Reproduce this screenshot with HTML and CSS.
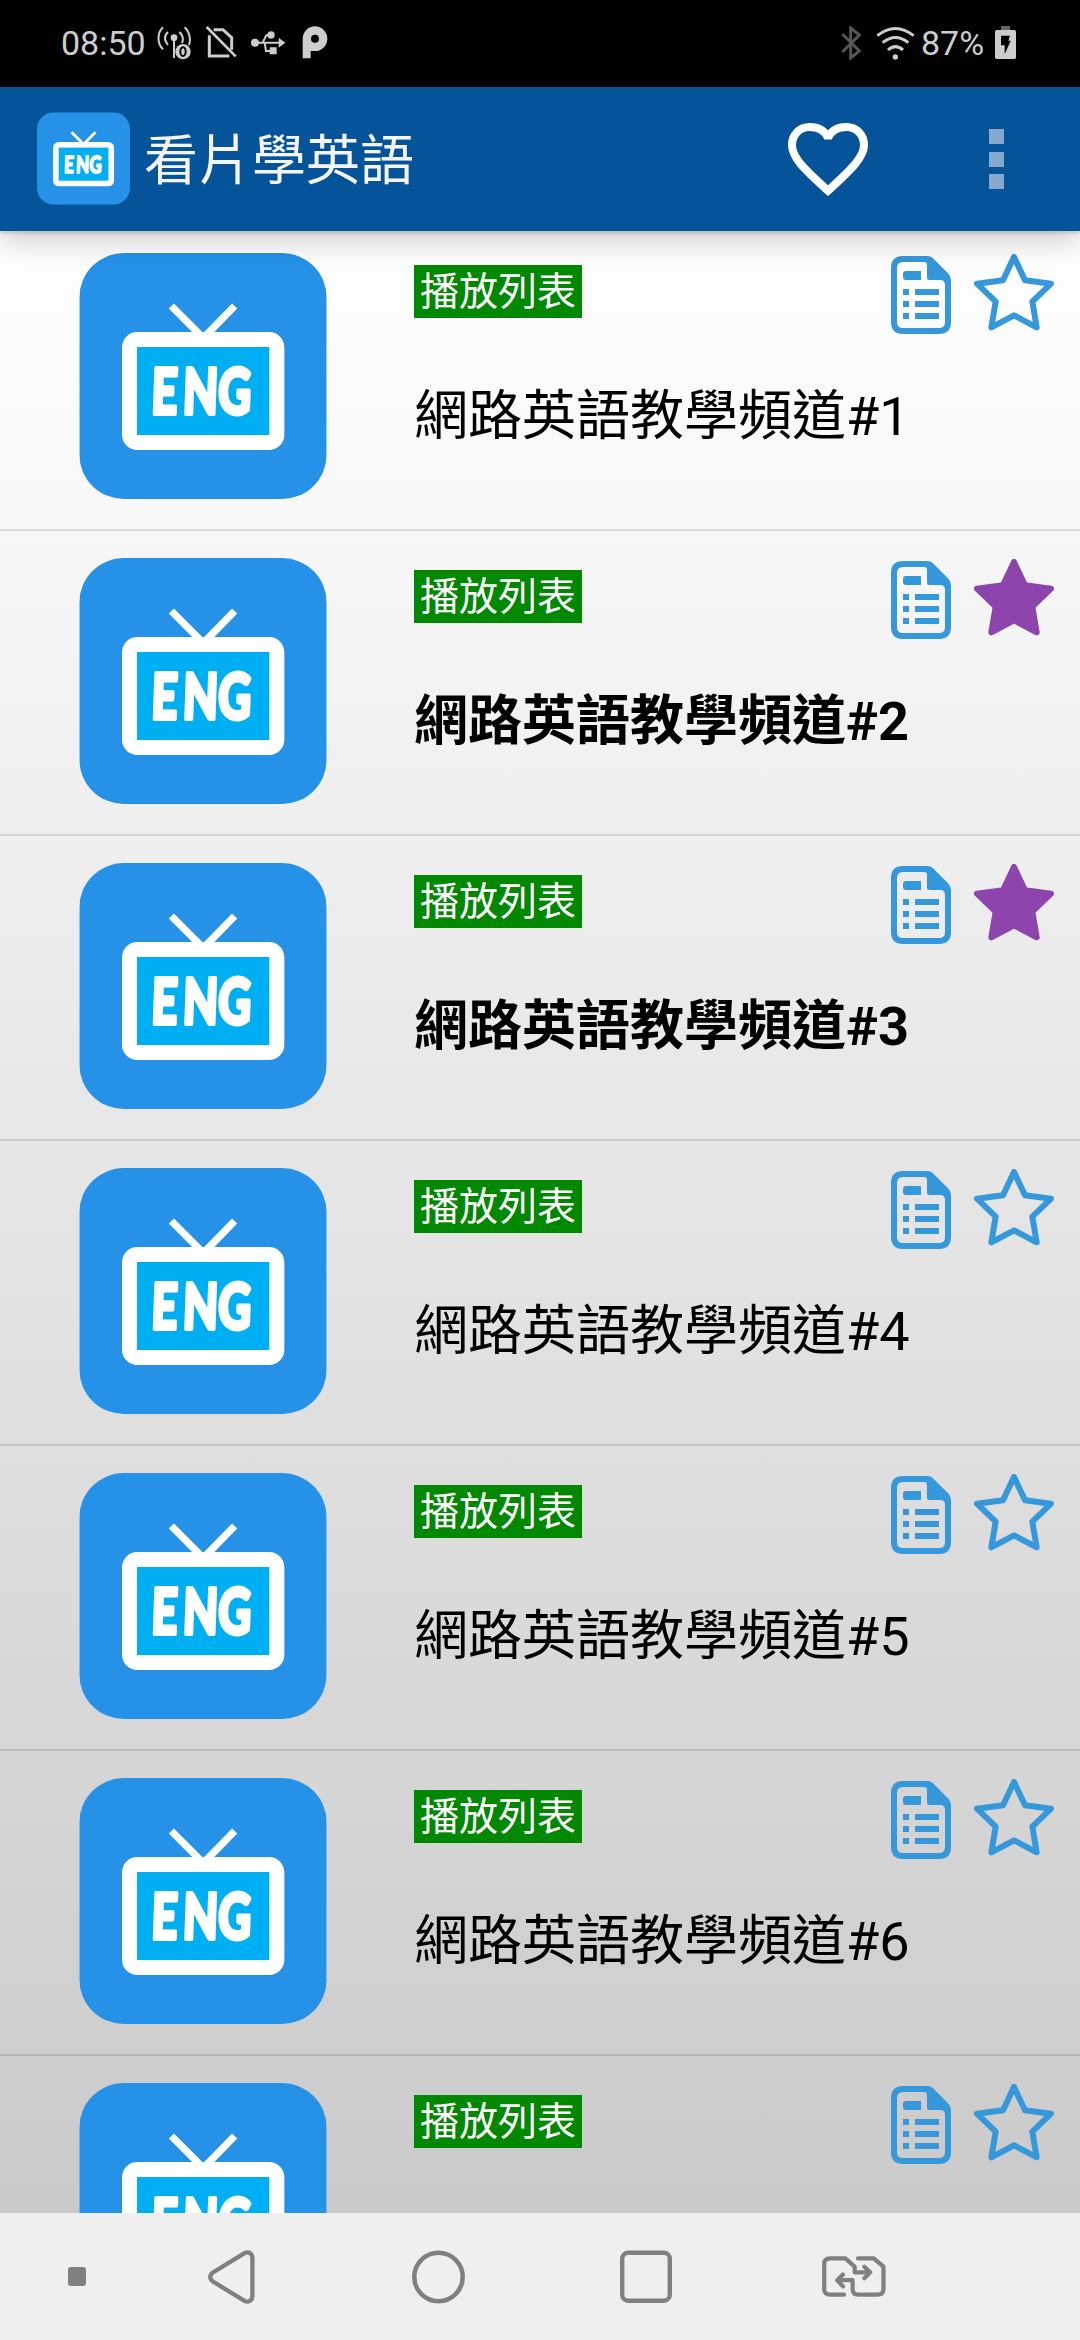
FILE: index.html
```html
<!DOCTYPE html>
<html lang="zh-Hant">
<head>
<meta charset="utf-8">
<title>看片學英語</title>
<link rel="stylesheet" href="styles.css">
</head>
<body>
<svg class="defs" aria-hidden="true">
  <symbol id="tv" viewBox="58 38 742 738">
    <rect x="58" y="38" width="742" height="738" rx="134" fill="#2592e7"/>
    <path d="M334 197L430 293L524 197" fill="none" stroke="#fff" stroke-width="22"/>
    <rect x="186" y="275" width="487" height="354" rx="46" fill="#fff"/>
    <rect x="231" y="320" width="397" height="264" fill="#00aff2"/>
  </symbol>
  <symbol id="doc" viewBox="453 528 180 234">
    <path fill="#3598db" fill-rule="evenodd" d="M489 528H562Q572 528 579 535L624 580Q633 589 633 599V726Q633 762 597 762H489Q453 762 453 726V564Q453 528 489 528ZM489 546Q471 546 471 564V726Q471 744 489 744H597Q615 744 615 726V615Q615 600 600 600H568Q561 600 561 593V555Q561 546 552 546Z"/>
    <path fill="#3598db" d="M498 573H543V600H498Q489 600 489 591V582Q489 573 498 573ZM489 627h18v18h-18zM525 627h72v18h-72zM489 663h18v18h-18zM525 663h72v18h-72zM489 699h18v18h-18zM525 699h72v18h-72z"/>
  </symbol>
  <symbol id="star" viewBox="702 521 240 231">
    <path d="M822 530L855 600L933 610L877 664L890 741L822 705L754 741L767 664L711 610L789 600Z" stroke-width="18" stroke-linejoin="round"/>
  </symbol>
</svg>

<div class="status">
  <span class="clock">08:50</span>
  <svg class="hotspot" width="34" height="34" viewBox="350 76 102 102">
    <g fill="none" stroke="#cdcdcd" stroke-width="6">
      <path d="M368 80C350 97 350 129 368 146M383 94C371 105 371 121 383 132M433 80C451 97 451 123 445 134M417 94C429 105 429 118 425 128"/>
      <path d="M401 110V171"/>
    </g>
    <circle cx="401" cy="111" r="10" fill="#cdcdcd"/>
    <circle cx="428" cy="153" r="26" fill="#000"/>
    <circle cx="428" cy="153" r="23" fill="#cdcdcd"/>
    <ellipse cx="428" cy="153" rx="8" ry="13" fill="none" stroke="#000" stroke-width="6"/>
    <path d="M401 120V171" stroke="#cdcdcd" stroke-width="6"/>
  </svg>
  <svg class="sim" width="31" height="32" viewBox="499 77 93 96">
    <path d="M522 88H550L576 112V148M569 167H509V105" fill="none" stroke="#cdcdcd" stroke-width="9"/>
    <path d="M501 80L588 168" stroke="#cdcdcd" stroke-width="8"/>
  </svg>
  <svg class="usb" width="35" height="24" viewBox="631 92 105 72">
    <path d="M640 127H718M666 127L677 105H690M672 127L676 152H690" fill="none" stroke="#cdcdcd" stroke-width="6"/>
    <circle cx="643" cy="127" r="12" fill="#cdcdcd"/><circle cx="691" cy="104" r="11" fill="#cdcdcd"/>
    <path d="M714 112L734 127L714 142ZM687 141h21v21h-21z" fill="#cdcdcd"/>
  </svg>
  <svg class="pico" width="26" height="33" viewBox="785 79 78 99">
    <path d="M787 176V117A37 37 0 1 1 824 154H811V176Z" fill="#cdcdcd"/>
    <circle cx="824" cy="117" r="12" fill="#000"/>
  </svg>
  <svg class="bt" width="20" height="34" viewBox="120 76 60 102">
    <path d="M124 100L175 151L149 172V82L175 103L124 154" fill="none" stroke="#555" stroke-width="9"/>
  </svg>
  <svg class="wifi" width="39" height="34" viewBox="225 76 117 102">
    <path d="M229 105Q283 62 338 105M245 126Q283 95 322 126M261 148Q283 128 306 148" fill="none" stroke="#cdcdcd" stroke-width="9"/>
    <circle cx="283" cy="169" r="8" fill="#cdcdcd"/>
  </svg>
  <span class="pct">87%</span>
  <svg class="bat" width="21" height="33" viewBox="585 78 63 99">
    <path d="M603 78h27v12h-27z" fill="#666"/>
    <rect x="585" y="90" width="63" height="87" rx="5" fill="#cdcdcd"/>
    <path d="M603 107H630L625 122H632L614 163V136H603Z" fill="#000"/>
  </svg>
</div>

<header class="bar">
  <svg class="logo" viewBox="0 0 742 738"><use href="#tv" width="742" height="738"/><text class="tv-text" x="0 132 278" transform="translate(214 482) skewX(-2) scale(.72 1)">ENG</text></svg>
  <h1 class="app-name">看片學英語</h1>
  <svg class="heart" width="80" height="74" viewBox="144 129 240 222">
    <path d="M264 173C253 150 232 141 209 141C178 141 156 165 156 195C156 232 190 265 264 332C338 265 372 230 372 195C372 165 350 141 319 141C296 141 275 150 264 173Z" fill="none" stroke="#fff" stroke-width="24" stroke-miterlimit="2"/>
  </svg>
  <div class="more"><i></i><i></i><i></i></div>
</header>

<main class="list">
  <article class="row">
    <svg class="thumb" viewBox="0 0 742 738"><use href="#tv" width="742" height="738"/><text class="tv-text" x="0 132 278" transform="translate(214 482) skewX(-2) scale(.72 1)">ENG</text></svg>
    <div class="info"><span class="tag">播放列表</span><h2 class="title">網路英語教學頻道#1</h2></div>
    <div class="actions"><svg class="doc"><use href="#doc"/></svg><svg class="star"><use href="#star"/></svg></div>
  </article>
  <article class="row fav">
    <svg class="thumb" viewBox="0 0 742 738"><use href="#tv" width="742" height="738"/><text class="tv-text" x="0 132 278" transform="translate(214 482) skewX(-2) scale(.72 1)">ENG</text></svg>
    <div class="info"><span class="tag">播放列表</span><h2 class="title">網路英語教學頻道#2</h2></div>
    <div class="actions"><svg class="doc"><use href="#doc"/></svg><svg class="star"><use href="#star"/></svg></div>
  </article>
  <article class="row fav">
    <svg class="thumb" viewBox="0 0 742 738"><use href="#tv" width="742" height="738"/><text class="tv-text" x="0 132 278" transform="translate(214 482) skewX(-2) scale(.72 1)">ENG</text></svg>
    <div class="info"><span class="tag">播放列表</span><h2 class="title">網路英語教學頻道#3</h2></div>
    <div class="actions"><svg class="doc"><use href="#doc"/></svg><svg class="star"><use href="#star"/></svg></div>
  </article>
  <article class="row">
    <svg class="thumb" viewBox="0 0 742 738"><use href="#tv" width="742" height="738"/><text class="tv-text" x="0 132 278" transform="translate(214 482) skewX(-2) scale(.72 1)">ENG</text></svg>
    <div class="info"><span class="tag">播放列表</span><h2 class="title">網路英語教學頻道#4</h2></div>
    <div class="actions"><svg class="doc"><use href="#doc"/></svg><svg class="star"><use href="#star"/></svg></div>
  </article>
  <article class="row">
    <svg class="thumb" viewBox="0 0 742 738"><use href="#tv" width="742" height="738"/><text class="tv-text" x="0 132 278" transform="translate(214 482) skewX(-2) scale(.72 1)">ENG</text></svg>
    <div class="info"><span class="tag">播放列表</span><h2 class="title">網路英語教學頻道#5</h2></div>
    <div class="actions"><svg class="doc"><use href="#doc"/></svg><svg class="star"><use href="#star"/></svg></div>
  </article>
  <article class="row">
    <svg class="thumb" viewBox="0 0 742 738"><use href="#tv" width="742" height="738"/><text class="tv-text" x="0 132 278" transform="translate(214 482) skewX(-2) scale(.72 1)">ENG</text></svg>
    <div class="info"><span class="tag">播放列表</span><h2 class="title">網路英語教學頻道#6</h2></div>
    <div class="actions"><svg class="doc"><use href="#doc"/></svg><svg class="star"><use href="#star"/></svg></div>
  </article>
  <article class="row">
    <svg class="thumb" viewBox="0 0 742 738"><use href="#tv" width="742" height="738"/><text class="tv-text" x="0 132 278" transform="translate(214 482) skewX(-2) scale(.72 1)">ENG</text></svg>
    <div class="info"><span class="tag">播放列表</span></div>
    <div class="actions"><svg class="doc"><use href="#doc"/></svg><svg class="star"><use href="#star"/></svg></div>
  </article>
</main>

<nav class="nav">
  <svg width="18" height="19"><rect width="18" height="19" rx="3" fill="#808080"/></svg>
  <svg width="47" height="54" viewBox="0 0 47 54"><path d="M36.5 3.1L5 22.4Q-.6 27 5 31.6L36.5 50.9C41 53 44.4 50 44.4 46V8C44.4 4 41 1 36.5 3.1Z" fill="none" stroke="#808080" stroke-width="4.3"/></svg>
  <svg width="53" height="54" viewBox="0 0 53 54"><ellipse cx="26.5" cy="27" rx="24.2" ry="24.2" fill="none" stroke="#808080" stroke-width="4.5"/></svg>
  <svg width="52" height="53" viewBox="0 0 52 53"><rect x="2.2" y="2.7" width="47.6" height="48" rx="6" fill="none" stroke="#808080" stroke-width="4.4"/></svg>
  <svg width="64" height="42" viewBox="0 0 64 42"><g fill="none" stroke="#808080" stroke-width="4.2" stroke-linecap="round" stroke-linejoin="round"><path d="M22 38.7H8Q2.2 38.7 2.2 33V8Q2.2 2.4 8 2.4H23.4L32.7 10.7V16.3H48M42.4 10.7L48.2 16.3L42.4 22.2"/><path d="M36 2.4H51.7L61.5 10.7V33Q61.5 38.7 55.4 38.7H36.2Q30.6 38.7 30.6 33V24.2H16M21 18.6L15.2 24.3L21 30.4"/></g></svg>
</nav>
</body>
</html>
```
FILE: styles.css
```css
* { box-sizing: border-box; }
body {
  margin: 0;
  width: 1080px;
  height: 2340px;
  display: flex;
  flex-direction: column;
  overflow: hidden;
  font-family: Roboto, "Noto Sans CJK TC", sans-serif;
}
svg { display: block; flex: none; }
.defs { position: absolute; width: 0; height: 0; }
.tv-text {
  font: 900 190px Lato, sans-serif;
  fill: #fff;
  stroke: #fff;
  stroke-width: 12px;
  stroke-linejoin: round;
}

.status {
  flex: none;
  height: 87px;
  display: flex;
  align-items: flex-start;
  padding: 26px 64px 0 61px;
  background: #000;
  color: #cdcdcd;
  font-size: 34px;
  line-height: 34px;
}
.clock { width: 96px; }
.sim { margin-left: 15px; }
.usb { margin: 5px 0 0 14px; }
.pico { margin-left: 16px; }
.bt { margin-left: auto; }
.wifi { margin-left: 15px; }
.pct { width: 74px; padding-left: 6px; }
.bat { margin-left: 6px; }

.bar {
  flex: none;
  position: relative;
  z-index: 1;
  height: 144px;
  margin-bottom: -5px;
  display: flex;
  align-items: center;
  padding: 0 76px 0 37px;
  background: #055499;
  box-shadow: 0 3px 2px rgba(0, 0, 0, .1), 0 8px 30px rgba(0, 0, 0, .22);
}
.logo { width: 93px; height: 93px; margin-bottom: 2px; }
.app-name {
  margin: 5px 0 0 14px;
  color: #f5f5f5;
  font-size: 54px;
  font-weight: 400;
  line-height: 80px;
}
.heart { margin: 2px 0 0 auto; }
.more {
  display: grid;
  gap: 7.5px;
  margin-left: 121px;
}
.more i { width: 15px; height: 15px; background: #84a9cd; }

.list {
  flex: 1;
  min-height: 0;
  overflow: hidden;
  background: linear-gradient(#fff, #cacaca);
}
.row {
  height: 305px;
  display: flex;
  align-items: flex-start;
  padding: 27px 26px 0 79px;
  border-bottom: 2px solid rgba(0, 0, 0, .11);
}
.thumb { width: 248px; height: 246px; }
.info {
  display: flex;
  flex-direction: column;
  align-items: flex-start;
  width: 470px;
  margin: 12px 0 0 87px;
  white-space: nowrap;
}
.tag {
  height: 53px;
  padding: 1px 6px 0;
  background: #080;
  color: #fff;
  font-size: 39px;
  line-height: 53px;
}
.title {
  margin: 59px 0 0;
  color: #000;
  font-size: 54px;
  font-weight: 400;
  line-height: 80px;
}
.fav .title { font-weight: 700; }
.actions {
  display: flex;
  align-items: flex-start;
  gap: 23px;
  margin-left: auto;
}
.doc { width: 60px; height: 78px; margin-top: 3px; }
.star { width: 80px; height: 77px; margin-top: 1px; fill: none; stroke: #3598db; }
.fav .star { fill: #8e44ad; stroke: #8e44ad; }

.nav {
  flex: none;
  height: 127px;
  display: grid;
  grid-template-columns: 154px 155px 259px 156px 260px;
  align-items: center;
  justify-items: center;
  background: #efefef;
}
```
